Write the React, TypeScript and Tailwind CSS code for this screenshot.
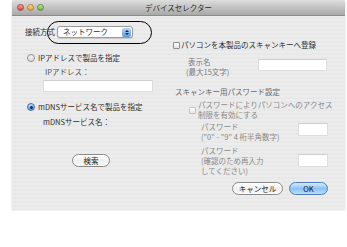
import React from "react"

const font = "font-['Noto_Sans_CJK_JP','Noto_Sans',sans-serif]"

function Radio({ on }: { on?: boolean }) {
  return on ? (
    <span className="w-[8px] h-[8px] rounded-full shrink-0 border border-[#3d6db3] bg-gradient-to-b from-[#bcdaf6] to-[#5c9ee6] flex items-center justify-center">
      <span className="w-[3px] h-[3px] rounded-full bg-[#1c2a44]" />
    </span>
  ) : (
    <span className="w-[8px] h-[8px] rounded-full shrink-0 border border-[#8e8e8e] bg-gradient-to-b from-[#f6f6f6] to-[#dcdcdc]" />
  )
}

function Check({ disabled }: { disabled?: boolean }) {
  return (
    <span
      className={`w-[7px] h-[7px] rounded-[1px] shrink-0 border bg-gradient-to-b from-white to-[#e4e4e4] ${
        disabled ? "border-[#c4c4c4]" : "border-[#8e8e8e]"
      }`}
    />
  )
}

function Field({ w, h = 12 }: { w: string; h?: number }) {
  return <div className={`${w} bg-white border border-[#dedede] border-t-[#cfcfcf]`} style={{ height: h }} />
}

function AquaButton({ children, primary, w }: { children: React.ReactNode; primary?: boolean; w: string }) {
  return (
    <div
      className={`${w} h-[13px] rounded-full border flex items-center justify-center text-[7.5px] leading-none ${
        primary
          ? "border-[#4f7fc0] bg-gradient-to-b from-[#d6ebfc] via-[#8cc2f2] to-[#b9dcfa] text-[#111]"
          : "border-[#8a8a8a] bg-gradient-to-b from-white via-[#f0f0f0] to-[#fafafa] text-[#222]"
      }`}
    >
      {children}
    </div>
  )
}

export default function App() {
  return (
    <div className={`w-[347px] h-[247px] bg-white pl-[12px] ${font}`}>
      <div className="relative w-[333px] h-[209px] flex flex-col bg-[repeating-linear-gradient(0deg,#ececec_0px,#ececec_2px,#e8e8e8_2px,#e8e8e8_4px)] shadow-[0_1px_2px_rgba(0,0,0,0.15)]">
        {/* Title bar */}
        <div className="h-[16px] shrink-0 grid grid-cols-[1fr_auto_1fr] items-center bg-gradient-to-b from-[#dedede] via-[#c2c2c2] to-[#a9a9a9] border-b border-[#8c8c8c] rounded-t-[3px]">
          <div className="flex items-center gap-[3px] pl-[5px]">
            <span className="w-[7px] h-[7px] rounded-full bg-gradient-to-b from-[#f3a3a0] to-[#d9433b] border border-[#a8423c]" />
            <span className="w-[7px] h-[7px] rounded-full bg-gradient-to-b from-[#f8d891] to-[#e2a326] border border-[#b58628]" />
            <span className="w-[7px] h-[7px] rounded-full bg-gradient-to-b from-[#c9e6a1] to-[#6db13b] border border-[#5f8e35]" />
          </div>
          <div className="text-[7.5px] leading-none text-[#2a2a2a]">デバイスセレクター</div>
          <div />
        </div>

        {/* Body */}
        <div className="flex flex-1 text-[7.5px] leading-[10px] text-[#2e2e2e]">
          {/* Left column */}
          <div className="w-[149px] flex flex-col">
            <div className="mt-[10px] h-[12px] flex items-center pl-[13px]">
              <span className="w-[32px]">接続方式</span>
              <div className="w-[76px] h-[12px] bg-white border border-[#9b9b9b] rounded-[3px] flex items-center justify-between pl-[5px] pr-[1px] shadow-[0_1px_1px_rgba(0,0,0,0.15)]">
                <span>ネットワーク</span>
                <span className="w-[9px] h-[9px] rounded-[2px] bg-gradient-to-b from-[#b7d6f5] to-[#5a9ae0] flex flex-col items-center justify-center gap-[1px]">
                  <span className="w-0 h-0 border-l-[2px] border-r-[2px] border-b-[2px] border-l-transparent border-r-transparent border-b-[#1a2a44]" />
                  <span className="w-0 h-0 border-l-[2px] border-r-[2px] border-t-[2px] border-l-transparent border-r-transparent border-t-[#1a2a44]" />
                </span>
              </div>
            </div>

            <div className="mt-[15px] h-[10px] flex items-center gap-[3px] pl-[15px]">
              <Radio />
              <span>IPアドレスで製品を指定</span>
            </div>
            <div className="mt-[4px] pl-[33px] text-[#555]">IPアドレス：</div>
            <div className="mt-[3px] ml-[31px]">
              <Field w="w-[110px]" />
            </div>

            <div className="mt-[10px] h-[10px] flex items-center gap-[3px] pl-[15px]">
              <Radio on />
              <span>mDNSサービス名で製品を指定</span>
            </div>
            <div className="mt-[5px] pl-[31px]">mDNSサービス名：</div>

            <div className="mt-[27px] ml-[60px]">
              <AquaButton w="w-[38px]">検索</AquaButton>
            </div>
          </div>

          {/* Right column */}
          <div className="flex-1 flex flex-col">
            <div className="mt-[24px] h-[10px] flex items-center gap-[1px] pl-[12px]">
              <Check />
              <span>パソコンを本製品のスキャンキーへ登録</span>
            </div>

            <div className="mt-[7px] flex items-start pr-[18px]">
              <div className="pl-[27px] text-[#7a7a7a]">
                <div>表示名</div>
                <div className="-ml-[2px]">(最大15文字)</div>
              </div>
              <div className="ml-auto mt-[2px]">
                <Field w="w-[69px]" />
              </div>
            </div>

            <div className="mt-[10px] pl-[14px] text-[#6a6a6a]">スキャンキー用パスワード設定</div>

            <div className="mt-[3px] flex items-center gap-[2px] pl-[28px] text-[#8a8a8a]">
              <Check disabled />
              <div>
                <div>パスワードによりパソコンへのアクセス</div>
                <div>制限を有効にする</div>
              </div>
            </div>

            <div className="mt-[2px] flex items-start pr-[17px] text-[#8a8a8a]">
              <div className="pl-[40px]">
                <div>パスワード</div>
                <div>("0" - "9" 4 桁半角数字)</div>
              </div>
              <div className="ml-auto mt-[1px]">
                <Field w="w-[30px]" h={13} />
              </div>
            </div>

            <div className="mt-[4px] flex items-start pr-[17px] text-[#8a8a8a]">
              <div className="pl-[40px]">
                <div>パスワード</div>
                <div>(確認のため再入力</div>
                <div>してください)</div>
              </div>
              <div className="ml-auto mt-[8px]">
                <Field w="w-[30px]" h={13} />
              </div>
            </div>

            <div className="mt-[6px] flex justify-end gap-[6px] pr-[17px]">
              <AquaButton w="w-[51px]">キャンセル</AquaButton>
              <AquaButton w="w-[39px]" primary>OK</AquaButton>
            </div>
          </div>
        </div>

        {/* Annotation oval around the connection selector */}
        <div className="absolute left-[35px] top-[21px] w-[105px] h-[23px] rounded-[12px] border-[1.5px] border-black pointer-events-none" />
      </div>
    </div>
  )
}
